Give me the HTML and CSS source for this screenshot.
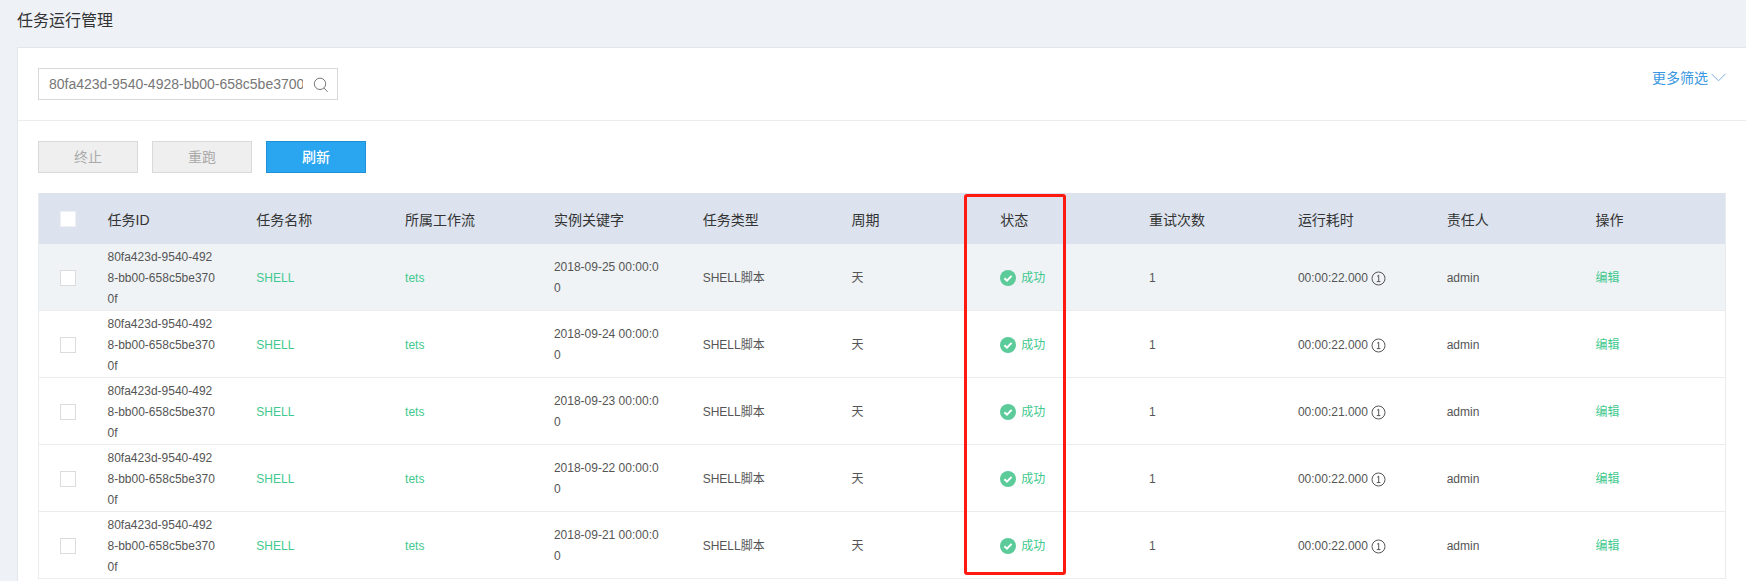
FILE: index.html
```html
<!DOCTYPE html>
<html lang="zh-CN">
<head>
  <meta charset="UTF-8" />
  <title>任务运行管理</title>
  <link rel="stylesheet" href="styles.css">
</head>
<body>
  <h1 class="page-title">任务运行管理</h1>

  <div class="card">
    <div class="filter-bar">
      <div class="search">
        <input type="text" class="search-input" value="80fa423d-9540-4928-bb00-658c5be3700f" />
        <svg class="search-icon" width="16" height="16" viewBox="0 0 16 16" fill="none" stroke="#777" stroke-width="1">
          <circle cx="7" cy="6.8" r="5.7" />
          <path d="M11 11l3.6 3.8" />
        </svg>
      </div>
      <a class="more-filter">更多筛选
        <svg width="15" height="9" viewBox="0 0 15 9" fill="none" stroke="#7fb0e8" stroke-width="1">
          <path d="M0.5 0.8l7 7 7-7" />
        </svg>
      </a>
    </div>

    <div class="content">
      <div class="toolbar">
        <button class="btn" disabled>终止</button>
        <button class="btn" disabled>重跑</button>
        <button class="btn btn-primary">刷新</button>
      </div>

      <table class="task-table">
        <colgroup>
          <col class="col-check" />
          <col span="10" class="col-data" />
          <col />
        </colgroup>
        <thead>
          <tr>
            <th><span class="checkbox"></span></th>
            <th>任务ID</th>
            <th>任务名称</th>
            <th>所属工作流</th>
            <th>实例关键字</th>
            <th>任务类型</th>
            <th>周期</th>
            <th>状态</th>
            <th>重试次数</th>
            <th>运行耗时</th>
            <th>责任人</th>
            <th>操作</th>
          </tr>
        </thead>
        <tbody id="rows"></tbody>
      </table>
    </div>
  </div>

  <div class="highlight"></div>

  <script>
    // Row data for the task list
    var tasks = [
      { date: '2018-09-25 00:00:00', time: '00:00:22.000' },
      { date: '2018-09-24 00:00:00', time: '00:00:22.000' },
      { date: '2018-09-23 00:00:00', time: '00:00:21.000' },
      { date: '2018-09-22 00:00:00', time: '00:00:22.000' },
      { date: '2018-09-21 00:00:00', time: '00:00:22.000' }
    ];

    var okIcon = '<svg class="ok-icon" width="16" height="16" viewBox="0 0 16 16"><circle cx="8" cy="8" r="8" fill="#5ccb9a"/><path d="M4.4 8.2l2.6 2.5 4.6-4.8" fill="none" stroke="#fff" stroke-width="2"/></svg>';
    var infoIcon = '<svg class="info-icon" width="15" height="15" viewBox="0 0 15 15" fill="none" stroke="#555"><circle cx="7.5" cy="7.5" r="6.5"/><path d="M6.2 5.2l1.5-1v6.2M5.8 10.6h3.6"/></svg>';

    var html = '';
    tasks.forEach(function (t) {
      html += '<tr>' +
        '<td><span class="checkbox"></span></td>' +
        '<td class="wrap">80fa423d-9540-4928-bb00-658c5be3700f</td>' +
        '<td class="green">SHELL</td>' +
        '<td class="green">tets</td>' +
        '<td class="wrap">' + t.date + '</td>' +
        '<td>SHELL脚本</td>' +
        '<td>天</td>' +
        '<td><span class="status">' + okIcon + '成功</span></td>' +
        '<td>1</td>' +
        '<td><span class="duration">' + t.time + infoIcon + '</span></td>' +
        '<td>admin</td>' +
        '<td class="green">编辑</td>' +
        '</tr>';
    });
    document.getElementById('rows').innerHTML = html;
  </script>
</body>
</html>
```

FILE: styles.css
```css
html, body { height: 581px; overflow: hidden; }
body { margin: 0; background: #eef1f6; color: #555; font-family: "Liberation Sans", Arial, "Noto Sans CJK SC", sans-serif; font-size: 12px; position: relative; }
.page-title { margin: 0; height: 47px; padding-left: 17px; font-size: 16px; font-weight: normal; line-height: 42px; color: #333; }
.card { margin-left: 17px; min-height: 540px; background: #fff; border-top: 1px solid #e3e6eb; border-left: 1px solid #e3e6eb; }
.filter-bar { display: flex; justify-content: space-between; padding: 20px; border-bottom: 1px solid #ececec; }
.search { position: relative; width: 300px; height: 32px; }
.search-input { box-sizing: border-box; width: 100%; height: 100%; padding: 0 34px 0 10px; border: 1px solid #d9d9d9; outline: none; color: #777; font-family: inherit; font-size: 14px; }
.search-icon { position: absolute; right: 9px; top: 9px; }
.more-filter { display: flex; align-items: center; gap: 3px; height: 18px; color: #3a97e0; font-size: 14px; }
.content { padding: 20px 20px 0 20px; }
.toolbar { display: flex; gap: 14px; margin-bottom: 20px; }
.btn { box-sizing: border-box; width: 100px; height: 32px; padding: 0 0 2px; border: 1px solid #d9d9d9; background: #efefef; color: #aaa; font-family: inherit; font-size: 14px; }
.btn-primary { background: #2aa5ef; border-color: #1f8fd6; color: #fff; font-weight: 500; }
.task-table { width: 100%; table-layout: fixed; border-collapse: collapse; border-left: 1px solid #e9ecef; border-right: 1px solid #e9ecef; }
.col-check { width: 69px; }
.col-data { width: 148.8px; }
.task-table th { height: 51px; padding: 0; background: #dce3ee; color: #333; font-size: 14px; font-weight: normal; text-align: left; }
.task-table td { height: 64px; padding: 2px 40px 0 0; border-bottom: 1px solid #ececec; line-height: 21px; white-space: nowrap; }
.task-table th:first-child { padding: 0 0 0 21px; }
.task-table td:first-child { height: 65px; padding: 1px 0 0 21px; }
.task-table tbody tr:first-child td { background: #eff3f6; }
.task-table td.wrap { white-space: normal; word-break: break-all; }
.task-table td.green, .status { color: #3fc98e; }
.checkbox { display: block; box-sizing: border-box; width: 16px; height: 16px; background: #fff; border: 1px solid #dcdcdc; }
th .checkbox { border-color: #eef0f4; }
.status { display: flex; align-items: center; gap: 5px; }
.duration { display: flex; align-items: center; gap: 3px; }
.highlight { position: absolute; left: 964px; top: 194px; width: 102px; height: 381px; box-sizing: border-box; border: 3px solid #ff1a10; border-radius: 3px; }
```
